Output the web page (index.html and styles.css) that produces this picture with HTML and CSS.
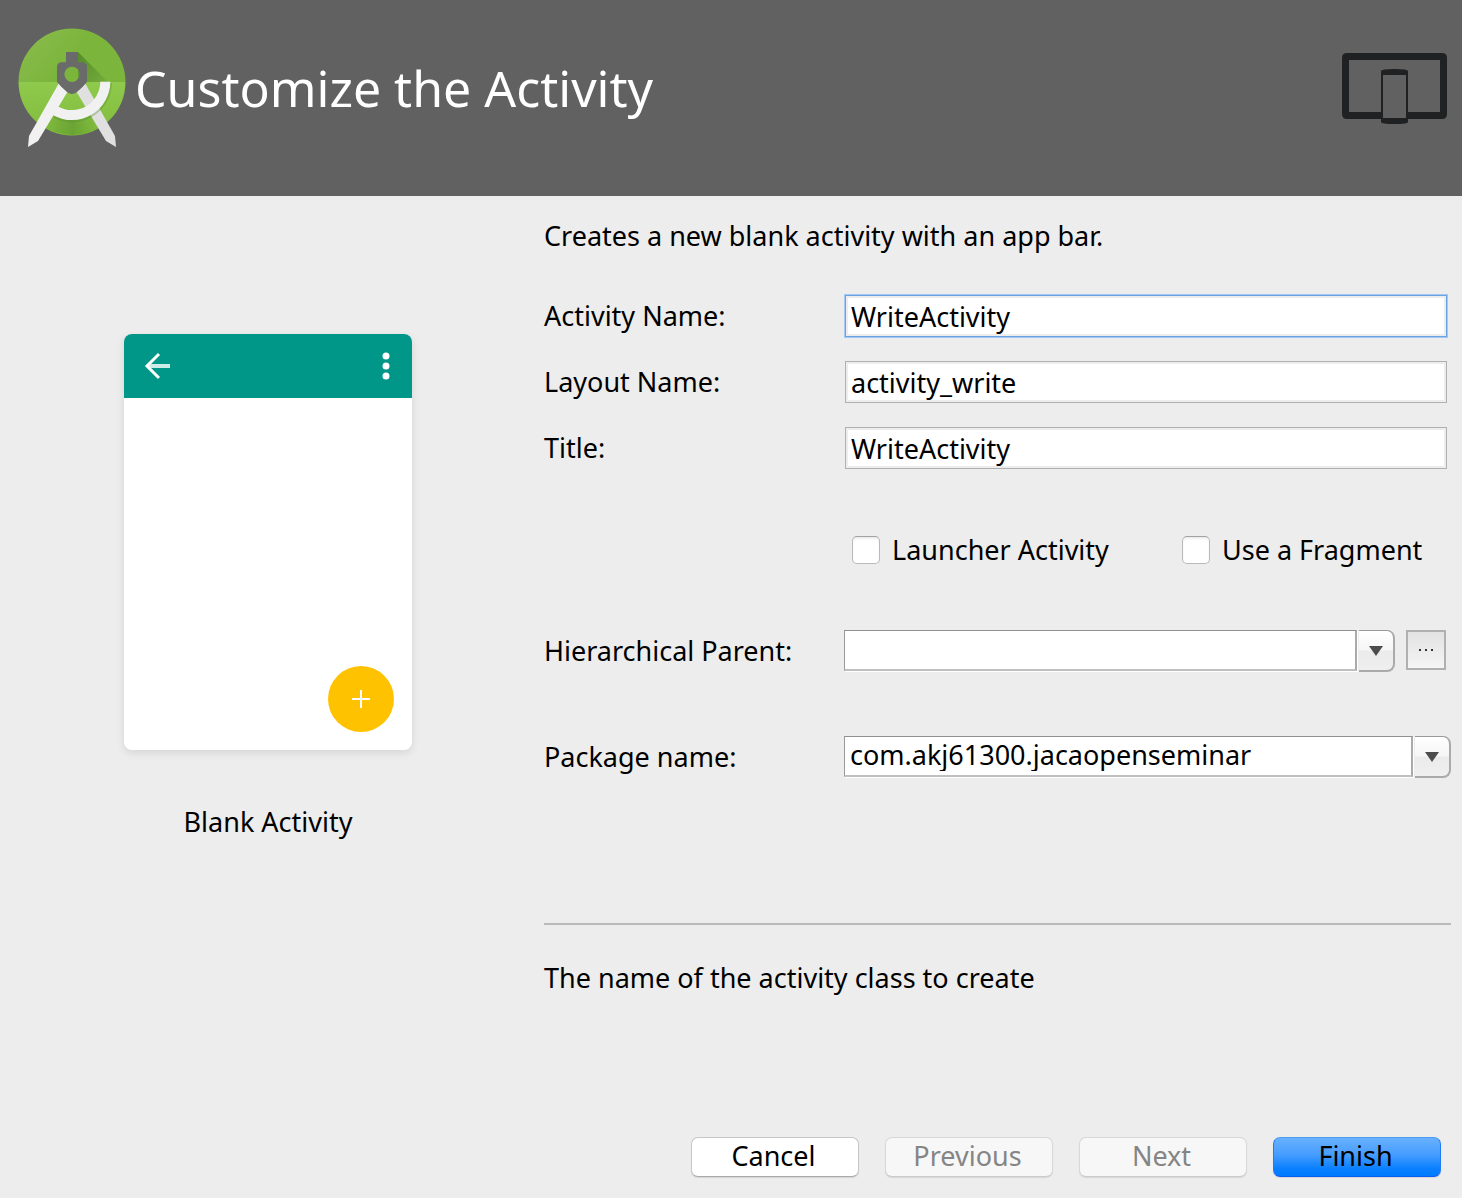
FILE: index.html
```html
<!DOCTYPE html>
<html lang="en">
<head>
<meta charset="utf-8">
<title>Customize the Activity</title>
<link rel="stylesheet" href="styles.css">
</head>
<body>
<form class="wizard">
  <header class="banner">
    <svg class="banner-logo" viewBox="16 26 112 124" aria-hidden="true">
      <defs>
        <linearGradient id="top" x1="0" y1="0" x2="1" y2="0.4"><stop offset="0" stop-color="#8bbc50"/><stop offset="0.6" stop-color="#7cb53c"/></linearGradient>
        <linearGradient id="bottom" x1="0" y1="0" x2="0" y2="1"><stop offset="0" stop-color="#8fca4c"/><stop offset="1" stop-color="#80bb3c"/></linearGradient>
        <linearGradient id="shade" x1="0" y1="0" x2="1" y2="1"><stop offset="0" stop-color="#33691e" stop-opacity="0.55"/><stop offset="1" stop-color="#33691e" stop-opacity="0.1"/></linearGradient>
        <linearGradient id="low" x1="0" y1="0" x2="1" y2="0"><stop offset="0" stop-color="#33691e" stop-opacity="0.05"/><stop offset="0.5" stop-color="#33691e" stop-opacity="0.3"/><stop offset="1" stop-color="#33691e" stop-opacity="0"/></linearGradient>
      </defs>
      <path fill="url(#top)" d="M18.500 82a53.500 53.500 0 0 1 107 0z"/>
      <path fill="url(#bottom)" d="M18.500 82a53.500 53.500 0 0 0 107 0z"/>
      <path fill="url(#shade)" d="M78 52l30 30H78z"/>
      <path fill="url(#low)" d="M53 115q19 10 38 1l8 12q-26 14-53 0z"/>
      <path fill="#e0e0e0" d="M76 91l9-8 30 53 1 11-10-6z"/>
      <path fill="#558b2f" opacity="0.35" d="M101 83h11a40 40 0 0 1-58 35l4-10q40 10 43-25z"/>
      <path fill="#f1f1f1" d="M100.300 81.700h10a38.300 38.300 0 0 1-57 33.500l4.700-8.700a28.500 28.500 0 0 0 42.300-24.800z"/>
      <path fill="#f1f1f1" d="M68 91l-9-8-30 53-1 11 10-6z"/>
      <path fill="#6a6a6a" fill-rule="evenodd" d="M66 52h12v10.300h4q5 0 5 5V82q-4 5-10 10-5 4-10 0-6-5-10-10V67.300q0-5 5-5h4zM72 66.700a7.600 7.600 0 1 0 .1 0z"/>
    </svg>
    <h1 class="banner-title">Customize the Activity</h1>
    <svg class="banner-devices" viewBox="0 0 106 72" aria-hidden="true">
      <path fill="#202122" fill-rule="evenodd" d="M5 1h95q5 0 5 5v56q0 5-5 5H5q-5 0-5-5V6q0-5 5-5zM7 8v52h91V8z"/>
      <path fill="#202122" d="M39 19q0-2 13.500-2T66 19v51q0 2-13.500 2T39 70z"/>
      <path fill="#616161" d="M41 23h23v43H41z"/>
    </svg>
  </header>

  <main class="content">
    <figure class="template">
      <div class="phone">
        <div class="phone-bar">
          <svg class="phone-back" viewBox="0 0 28 28" aria-hidden="true"><path fill="none" stroke="#cdebe7" stroke-width="4" d="M5 14h21"/><path fill="none" stroke="#fff" stroke-width="3" d="M15 2L3 14l12 12"/></svg>
          <svg class="phone-more" viewBox="0 0 8 28" aria-hidden="true"><g fill="#fff"><circle cx="4" cy="4" r="3.500"/><circle cx="4" cy="14" r="3.500"/><circle cx="4" cy="24" r="3.500"/></g></svg>
        </div>
        <div class="phone-body">
          <svg class="phone-fab" viewBox="0 0 66 66" aria-hidden="true"><circle cx="33" cy="33" r="33" fill="#ffc200"/><path stroke="#fff" stroke-width="2" d="M24 33h18M33 24v18"/></svg>
        </div>
      </div>
      <figcaption class="template-name">Blank Activity</figcaption>
    </figure>

    <section class="settings">
      <p class="text">Creates a new blank activity with an app bar.</p>

      <div class="fields">
        <label for="activity">Activity Name:</label>
        <input class="textbox textbox-active" id="activity" type="text" value="WriteActivity">
        <label for="layout">Layout Name:</label>
        <input class="textbox" id="layout" type="text" value="activity_write">
        <label for="title">Title:</label>
        <input class="textbox" id="title" type="text" value="WriteActivity">
      </div>

      <div class="checks">
        <label class="check"><input class="check-box" type="checkbox">Launcher Activity</label>
        <label class="check"><input class="check-box" type="checkbox">Use a Fragment</label>
      </div>

      <div class="combo-row">
        <label for="parent">Hierarchical Parent:</label>
        <div class="picker">
          <div class="combo">
            <span class="combo-field"></span>
            <span class="combo-arrow"><svg viewBox="0 0 14 10" width="14" height="10" aria-hidden="true"><path fill="#4c4c4c" d="M0 0h14L7 10z"/></svg></span>
            <select class="combo-select" id="parent"><option value=""></option></select>
          </div>
          <button class="browse" type="button" aria-label="Browse"><svg viewBox="0 0 16 2" width="16" height="2" aria-hidden="true"><path fill="#333" d="M1 0h2v2H1zM7 0h2v2H7zM13 0h2v2h-2z"/></svg></button>
        </div>
      </div>

      <div class="combo-row combo-row-package">
        <label for="package">Package name:</label>
        <div class="combo">
          <span class="combo-field"></span>
          <span class="combo-arrow"><svg viewBox="0 0 14 10" width="14" height="10" aria-hidden="true"><path fill="#4c4c4c" d="M0 0h14L7 10z"/></svg></span>
          <select class="combo-select" id="package"><option>com.akj61300.jacaopenseminar</option></select>
        </div>
      </div>

      <hr class="divider">
      <p class="text">The name of the activity class to create</p>
    </section>
  </main>

  <footer class="actions">
    <button class="button" type="button">Cancel</button>
    <button class="button" type="button" disabled>Previous</button>
    <button class="button" type="button" disabled>Next</button>
    <button class="button button-primary" type="submit">Finish</button>
  </footer>
</form>
</body>
</html>
```
FILE: styles.css
```css
* {
  box-sizing: border-box;
}

body {
  margin: 0;
  background: #ededed;
  color: #000;
  font: 27px/32px "Lucida Grande", "Noto Sans", sans-serif;
}

input,
select,
button {
  margin: 0;
  color: inherit;
  font: inherit;
}

.wizard {
  display: flex;
  flex-direction: column;
  min-height: 100vh;
}

/* Banner */
.banner {
  display: flex;
  align-items: center;
  gap: 7px;
  padding: 26px 14px 46px 16px;
  background: #616161;
  color: #fff;
}

.banner-logo {
  width: 112px;
  height: 124px;
}

.banner-title {
  flex: 1;
  margin: 0;
  font-size: 50px;
  font-weight: 400;
  line-height: 60px;
}

.banner-devices {
  width: 106px;
  height: 72px;
}

/* Template preview */
.content {
  display: grid;
  grid-template-columns: 536px 1fr;
  gap: 8px;
}

.template {
  display: flex;
  flex-direction: column;
  align-items: center;
  gap: 56px;
  margin: 0;
  padding-top: 138px;
}

.phone {
  display: flex;
  flex-direction: column;
  width: 288px;
  height: 416px;
  overflow: hidden;
  border-radius: 8px;
  background: #fff;
  box-shadow: 0 3px 8px rgba(0, 0, 0, 0.1);
}

.phone-bar {
  display: flex;
  align-items: center;
  justify-content: space-between;
  height: 64px;
  padding: 0 22px 0 20px;
  background: #009688;
}

.phone-back {
  width: 28px;
  height: 28px;
}

.phone-more {
  width: 8px;
  height: 28px;
}

.phone-body {
  display: flex;
  flex: 1;
  align-items: flex-end;
  justify-content: flex-end;
  padding: 18px;
}

.phone-fab {
  width: 66px;
  height: 66px;
}

/* Settings */
.settings {
  padding: 24px 11px 0 0;
}

.text {
  margin: 0;
}

.fields {
  display: grid;
  grid-template-columns: 301px 1fr;
  gap: 24px 0;
  align-items: center;
  margin: 43px 4px 60px 0;
}

.textbox {
  width: 100%;
  height: 42px;
  padding: 0 5px;
  border: 1px solid #b0b0b0;
  outline: 0;
  background: #fff;
  box-shadow: inset 0 0 0 2px #ededed;
}

.textbox-active,
.textbox:focus {
  border-color: #6ba2e2;
  box-shadow: inset 0 0 0 2px #ededed, 0 0 0 1px #a3c8f3;
}

.checks {
  display: grid;
  grid-template-columns: 330px 1fr;
  padding-left: 308px;
}

.check {
  display: flex;
  align-items: center;
  gap: 12px;
  height: 42px;
  white-space: nowrap;
}

.check-box {
  width: 28px;
  height: 28px;
  appearance: none;
  border: 1px solid #b9b9b9;
  border-top-color: #a2a2a2;
  border-radius: 5px;
  background: #fff;
  box-shadow: inset 0 2px 2px #eee;
}

.check-box:checked {
  background: #3b8ef3;
}

.combo-row {
  display: grid;
  grid-template-columns: 300px 1fr;
  align-items: center;
  margin-top: 59px;
}

.combo-row-package {
  margin-top: 64px;
}

.picker {
  display: grid;
  grid-template-columns: 1fr 40px;
  gap: 11px;
  align-items: start;
  margin-right: 5px;
}

.combo {
  display: grid;
  grid-template-columns: 1fr 36px;
  column-gap: 2px;
  height: 42px;
}

.combo-field {
  grid-area: 1 / 1;
  height: 41px;
  border: 1px solid #999;
  border-width: 1px 2px 2px 1px;
  border-color: #8f8f8f #aaa #c0c0c0 #999;
  background: #fff;
  box-shadow: 1px 1px 0 #fff;
}

.combo-arrow {
  display: flex;
  grid-area: 1 / 2;
  align-items: center;
  justify-content: center;
  border: 1px solid #999;
  border-width: 1px 2px 2px 0;
  border-color: #999 #aaa #aaa;
  border-radius: 0 8px 8px 0;
  background: linear-gradient(#fff, #f6f6f6 48%, #ebebeb 52%, #efefef);
}

.combo-select {
  grid-area: 1 / 1 / 2 / 3;
  width: 100%;
  height: 38px;
  padding: 0 44px 0 6px;
  appearance: none;
  border: 0;
  background: transparent;
}

.browse {
  display: flex;
  align-items: center;
  justify-content: center;
  width: 40px;
  height: 40px;
  padding: 0;
  border: 2px solid #b0b0b0;
  background: linear-gradient(#e2e2e2, #f5f5f5);
}

.divider {
  height: 2px;
  margin: 145px 0 37px;
  border: 0;
  background: #bababa;
}

/* Actions */
.actions {
  display: flex;
  justify-content: flex-end;
  gap: 26px;
  margin-top: auto;
  padding: 21px;
}

.button {
  width: 168px;
  height: 40px;
  padding: 0 3px 2px 0;
  border: 1px solid #c6c6c6;
  border-bottom-color: #aaa;
  border-radius: 7px;
  background: #fff;
  box-shadow: 0 1px 1px rgba(0, 0, 0, 0.1);
}

.button:disabled {
  border-color: #d8d8d8;
  border-bottom-color: #ccc;
  background: #f7f7f7;
  color: #858585;
}

.button-primary {
  border-color: #4e9df5 #1f7cf5 #0a5ff0;
  background: linear-gradient(#69b1ff, #459cff 45%, #0a80ff 80%, #007aff);
}
```
